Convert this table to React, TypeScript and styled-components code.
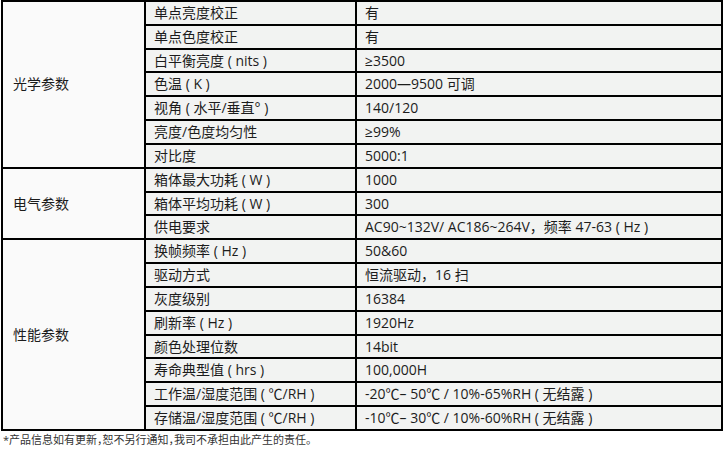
import React from "react";
import styled, { createGlobalStyle } from "styled-components";

const GlobalStyle = createGlobalStyle`
  html, body {
    margin: 0;
    padding: 0;
    background: #ffffff;
  }
  body {
    font-family: "Open Sans", "Noto Sans CJK SC", sans-serif;
    color: #1c1c1c;
  }
`;

const Page = styled.div`
  width: 724px;
  padding: 0 0 0 1px;
  box-sizing: border-box;
`;

const Table = styled.table`
  border-collapse: collapse;
  table-layout: fixed;
  width: 720px;
  font-size: 14px;
`;

const Row = styled.tr`
  height: 23.83px;
`;

const Cell = styled.td<{ $category?: boolean }>`
  border: 2px solid #000;
  padding: 0 0 0 ${(p) => (p.$category ? "10px" : "8px")};
  background: ${(p) => (p.$category ? "#fafafa" : "#f2f3f2")};
  line-height: 18px;
  vertical-align: middle;
  white-space: nowrap;
  overflow: hidden;
`;

const Note = styled.div`
  font-size: 11px;
  color: #333;
  padding: 2px 0 0 2px;
  line-height: 14px;
  font-feature-settings: "halt";
`;

type Group = { name: string; rows: [string, string][] };

const groups: Group[] = [
  {
    name: "光学参数",
    rows: [
      ["单点亮度校正", "有"],
      ["单点色度校正", "有"],
      ["白平衡亮度 ( nits )", "≥3500"],
      ["色温 ( K )", "2000—9500 可调"],
      ["视角 ( 水平/垂直° )", "140/120"],
      ["亮度/色度均匀性", "≥99%"],
      ["对比度", "5000:1"],
    ],
  },
  {
    name: "电气参数",
    rows: [
      ["箱体最大功耗 ( W )", "1000"],
      ["箱体平均功耗 ( W )", "300"],
      ["供电要求", "AC90~132V/ AC186~264V，频率 47-63 ( Hz )"],
    ],
  },
  {
    name: "性能参数",
    rows: [
      ["换帧频率 ( Hz )", "50&60"],
      ["驱动方式", "恒流驱动，16 扫"],
      ["灰度级别", "16384"],
      ["刷新率 ( Hz )", "1920Hz"],
      ["颜色处理位数", "14bit"],
      ["寿命典型值 ( hrs )", "100,000H"],
      ["工作温/湿度范围 ( ℃/RH )", "-20℃– 50℃ / 10%-65%RH ( 无结露 )"],
      ["存储温/湿度范围 ( ℃/RH )", "-10℃– 30℃ / 10%-60%RH ( 无结露 )"],
    ],
  },
];

export default function App() {
  return (
    <>
      <GlobalStyle />
      <Page>
        <Table>
          <colgroup>
            <col style={{ width: 143 }} />
            <col style={{ width: 211 }} />
            <col style={{ width: 366 }} />
          </colgroup>
          <tbody>
            {groups.map((g) =>
              g.rows.map((r, i) => (
                <Row key={g.name + i}>
                  {i === 0 && (
                    <Cell $category rowSpan={g.rows.length}>
                      {g.name}
                    </Cell>
                  )}
                  <Cell>{r[0]}</Cell>
                  <Cell>{r[1]}</Cell>
                </Row>
              ))
            )}
          </tbody>
        </Table>
        <Note>*产品信息如有更新，恕不另行通知，我司不承担由此产生的责任。</Note>
      </Page>
    </>
  );
}
